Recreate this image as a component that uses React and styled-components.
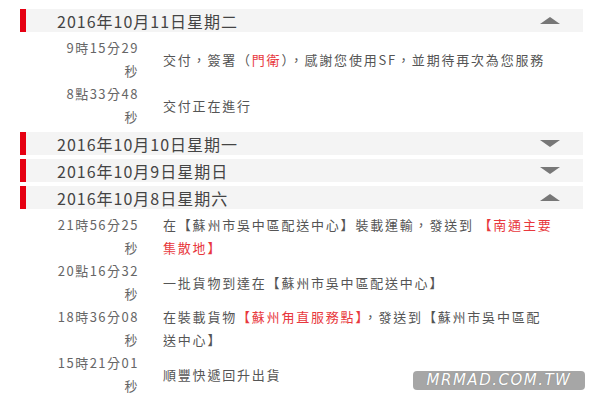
import React from "react";
import styled, { createGlobalStyle } from "styled-components";

const GlobalStyle = createGlobalStyle`
  html, body {
    margin: 0;
    padding: 0;
    background: #ffffff;
  }
  body {
    font-family: "Noto Sans CJK TC", "Noto Sans", sans-serif;
  }
`;

const Page = styled.div`
  position: relative;
  display: flex;
  flex-direction: column;
  gap: 4px;
  width: 600px;
  height: 400px;
  overflow: hidden;
  padding-top: 9px;
  box-sizing: border-box;
`;

const DayGroup = styled.section`
  display: flex;
  flex-direction: column;
  gap: 4px;
`;

const DayHeader = styled.div`
  display: flex;
  align-items: center;
  justify-content: space-between;
  height: 23px;
  margin: 0 17px 0 20px;
  padding: 0 23px 0 31px;
  border-left: 6px solid #e60012;
  background-color: #f4f4f4;
  font-size: 16px;
  letter-spacing: 1px;
  color: #444;
`;

const Arrow = styled.span`
  width: 0;
  height: 0;
  border-left: 10px solid transparent;
  border-right: 10px solid transparent;
  border-bottom: ${(p) => (p.$open ? "7px solid #777" : "none")};
  border-top: ${(p) => (p.$open ? "none" : "7px solid #777")};
`;

const RowList = styled.div`
  display: flex;
  flex-direction: column;
`;

const Row = styled.div`
  display: grid;
  grid-template-columns: 139px 1fr;
  column-gap: 24px;
  align-items: center;
  height: 46px;
  font-size: 13px;
  line-height: 23px;
`;

const Time = styled.div`
  text-align: right;
  color: #666;
  letter-spacing: 1.5px;
`;

const Desc = styled.div`
  color: #555;
  letter-spacing: 1.8px;
  white-space: nowrap;
`;

const Red = styled.span`
  color: #e8383d;
`;

const Watermark = styled.div`
  position: absolute;
  right: 15px;
  bottom: 10px;
  width: 172px;
  height: 19px;
  border-radius: 4px;
  background-color: rgba(150, 150, 150, 0.85);
  color: #fff;
  font-family: "DejaVu Sans", sans-serif;
  font-style: italic;
  font-size: 15px;
  letter-spacing: 1.5px;
  line-height: 19px;
  text-align: center;
  text-shadow: 0 0 1px #777;
`;

const days = [
  {
    date: "2016年10月11日星期二",
    open: true,
    rows: [
      {
        time: "9時15分29",
        desc: (
          <>
            交付，簽署（<Red>門衛</Red>），感謝您使用SF，並期待再次為您服務
          </>
        ),
      },
      { time: "8點33分48", desc: "交付正在進行" },
    ],
  },
  { date: "2016年10月10日星期一", open: false, rows: [] },
  { date: "2016年10月9日星期日", open: false, rows: [] },
  {
    date: "2016年10月8日星期六",
    open: true,
    rows: [
      {
        time: "21時56分25",
        desc: (
          <>
            在【蘇州市吳中區配送中心】裝載運輸，發送到 <Red>【南通主要</Red>
            <br />
            <Red>集散地】</Red>
          </>
        ),
      },
      { time: "20點16分32", desc: "一批貨物到達在【蘇州市吳中區配送中心】" },
      {
        time: "18時36分08",
        desc: (
          <>
            在裝載貨物<Red>【蘇州甪直服務點】</Red>，發送到【蘇州市吳中區配
            <br />
            送中心】
          </>
        ),
      },
      { time: "15時21分01", desc: "順豐快遞回升出貨" },
    ],
  },
];

export default function App() {
  return (
    <Page>
      <GlobalStyle />
      {days.map((day) => (
        <DayGroup key={day.date}>
          <DayHeader>
            <span>{day.date}</span>
            <Arrow $open={day.open} />
          </DayHeader>
          {day.open && (
            <RowList>
              {day.rows.map((row) => (
                <Row key={row.time}>
                  <Time>
                    {row.time}
                    <br />秒
                  </Time>
                  <Desc>{row.desc}</Desc>
                </Row>
              ))}
            </RowList>
          )}
        </DayGroup>
      ))}
      <Watermark>MRMAD.COM.TW</Watermark>
    </Page>
  );
}
